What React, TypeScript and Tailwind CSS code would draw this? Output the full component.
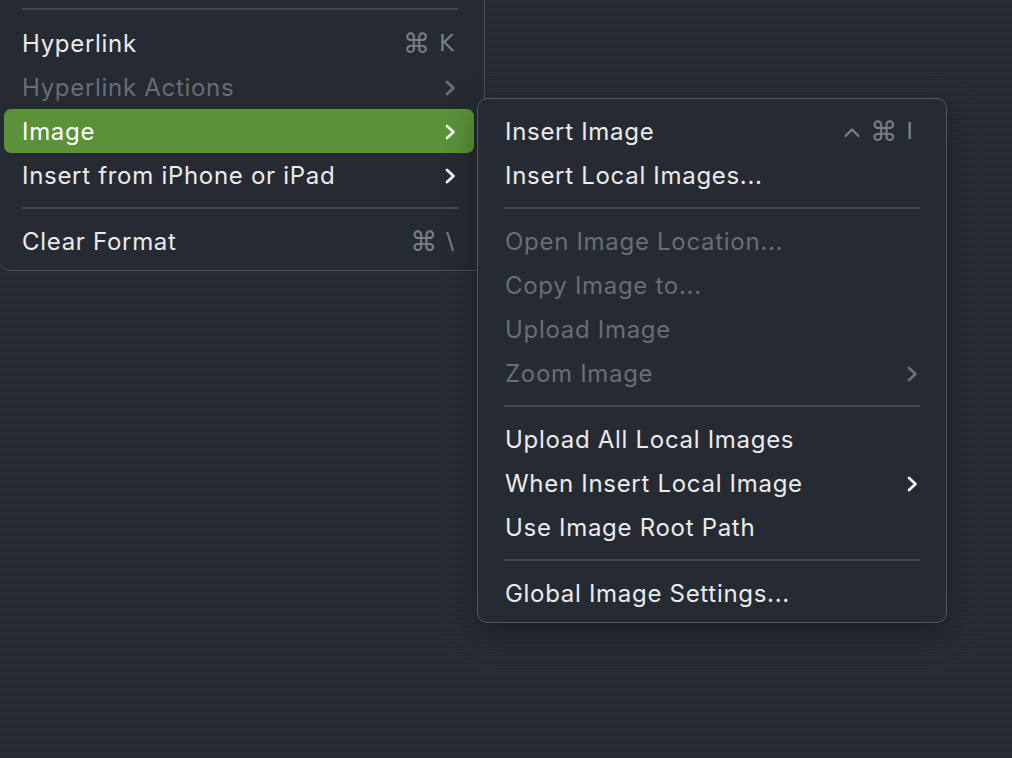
import React from "react";

type Item =
  | { kind: "sep" }
  | {
      kind: "item";
      label: string;
      shortcut?: string[];
      submenu?: boolean;
      disabled?: boolean;
      active?: boolean;
    };

const mainItems: Item[] = [
  { kind: "item", label: "Hyperlink", shortcut: ["⌘", "K"] },
  { kind: "item", label: "Hyperlink Actions", submenu: true, disabled: true },
  { kind: "item", label: "Image", submenu: true, active: true },
  { kind: "item", label: "Insert from iPhone or iPad", submenu: true },
  { kind: "sep" },
  { kind: "item", label: "Clear Format", shortcut: ["⌘", "\\"] },
];

const imageItems: Item[] = [
  { kind: "item", label: "Insert Image", shortcut: ["^", "⌘", "I"] },
  { kind: "item", label: "Insert Local Images..." },
  { kind: "sep" },
  { kind: "item", label: "Open Image Location...", disabled: true },
  { kind: "item", label: "Copy Image to...", disabled: true },
  { kind: "item", label: "Upload Image", disabled: true },
  { kind: "item", label: "Zoom Image", submenu: true, disabled: true },
  { kind: "sep" },
  { kind: "item", label: "Upload All Local Images" },
  { kind: "item", label: "When Insert Local Image", submenu: true },
  { kind: "item", label: "Use Image Root Path" },
  { kind: "sep" },
  { kind: "item", label: "Global Image Settings..." },
];

const Chevron = ({ dim }: { dim?: boolean }) => (
  <svg width="12" height="18" viewBox="0 0 12 18" className={dim ? "text-[#6b6f77]" : "text-[#f0f0f0]"}>
    <path d="M3 3 L9.5 9 L3 15" fill="none" stroke="currentColor" strokeWidth="2.8" strokeLinecap="round" strokeLinejoin="round" />
  </svg>
);

const Caret = () => (
  <svg width="18" height="12" viewBox="0 0 18 12" className="text-[#7a7e86]">
    <path d="M2.5 10 L9 3.5 L15.5 10" fill="none" stroke="currentColor" strokeWidth="2.4" strokeLinecap="round" strokeLinejoin="round" />
  </svg>
);

const Row = ({ item, sub }: { item: Item; sub?: boolean }) => {
  if (item.kind === "sep") {
    return (
      <div className="h-[22px] flex items-center">
        <div className={`h-[2px] flex-1 bg-[#454951] ${sub ? "mx-[16px]" : "ml-[18px] mr-[16px]"}`} />
      </div>
    );
  }
  const text = item.active ? "text-white" : item.disabled ? "text-[#696d75]" : "text-[#ebebeb]";
  return (
    <div
      className={`h-[44px] flex items-center justify-between rounded-[7px] pr-[18px] pt-[1px] ${
        sub ? "pl-[17px]" : "pl-[18px]"
      } ${item.active ? "bg-[#5a9139]" : ""}`}
    >
      <span className={`text-[24px] tracking-[0.7px] ${text}`}>{item.label}</span>
      {item.submenu && <Chevron dim={item.disabled} />}
      {item.shortcut && (
        <span
          className={`flex items-center gap-[9px] text-[23px] text-[#7a7e86] font-['DejaVu_Sans',sans-serif] ${
            sub ? "pr-[5px]" : "pr-[2px]"
          }`}
        >
          {item.shortcut.map((k, i) =>
            k === "^" ? (
              <Caret key={i} />
            ) : k === "⌘" ? (
              <span key={i} className="text-[27px] leading-none">
                {k}
              </span>
            ) : (
              <span key={i}>{k}</span>
            )
          )}
        </span>
      )}
    </div>
  );
};

export default function App() {
  return (
    <div className="relative w-[1012px] h-[758px] overflow-hidden font-['Inter','DejaVu_Sans',sans-serif] bg-[repeating-linear-gradient(to_bottom,#2a2e37_0px,#2a2e37_1px,#252932_1px,#252932_2px)]">
      <div className="absolute left-0 top-0 w-[485px] bg-[#262a32] border-r border-b border-[#4c5059] rounded-bl-[10px] rounded-br-[10px] pl-[4px] pr-[10px] pb-[7px]">
        <div className="h-[21px] flex items-start pt-[8px]">
          <div className="h-[2px] flex-1 bg-[#454951] ml-[18px] mr-[16px]" />
        </div>
        {mainItems.map((it, i) => (
          <Row key={i} item={it} />
        ))}
      </div>

      <div className="absolute left-[477px] top-[98px] w-[470px] bg-[#262a32] border border-[#53575f] rounded-[10px] px-[10px] pt-[10px] pb-[7px] shadow-[0_10px_30px_rgba(0,0,0,0.35)]">
        {imageItems.map((it, i) => (
          <Row key={i} item={it} sub />
        ))}
      </div>
    </div>
  );
}
